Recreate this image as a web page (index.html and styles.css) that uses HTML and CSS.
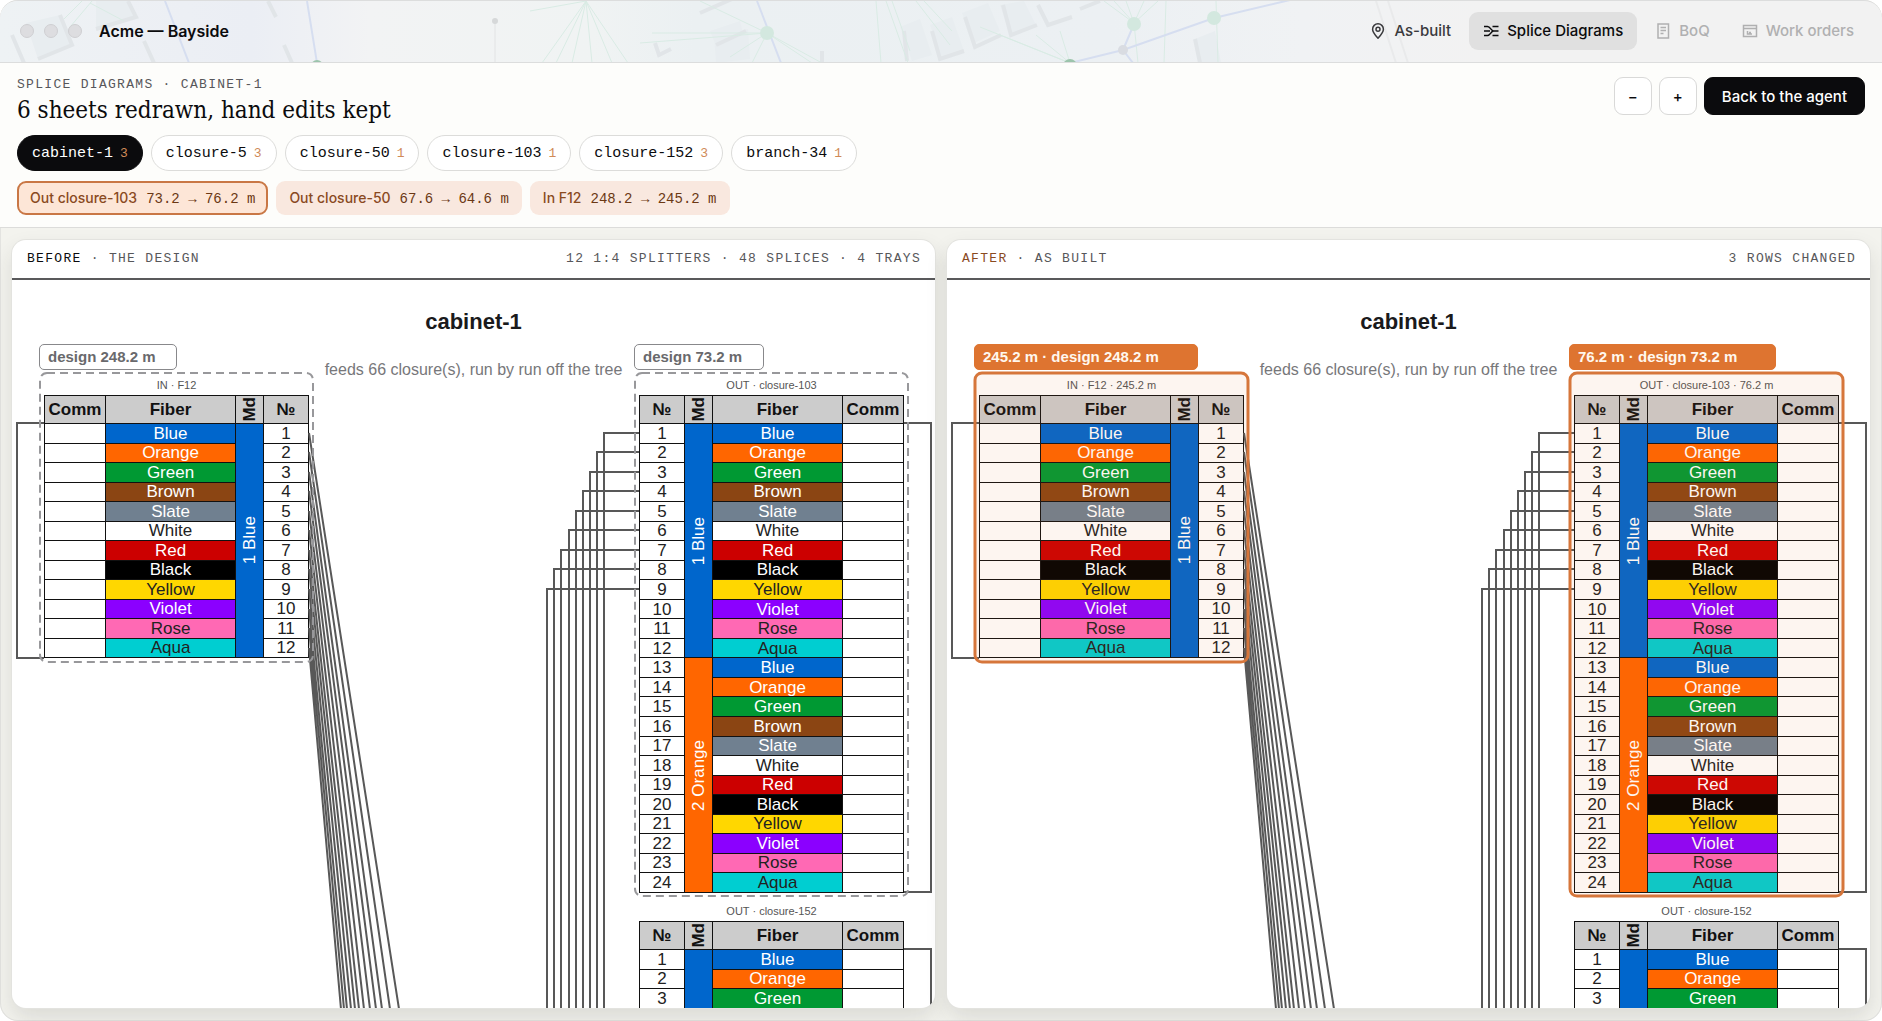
FILE: index.html
```html
<!DOCTYPE html>
<html lang="en">
<head>
<meta charset="utf-8">
<meta name="viewport" content="width=device-width, initial-scale=1">
<title>Acme — Bayside</title>
<link rel="stylesheet" href="styles.css">
</head>
<body>
<div class="app">
  <header class="titlebar">
    <svg class="backdrop" width="1480" height="62" aria-hidden="true">
      <defs>
        <linearGradient id="haze" x1="0" x2="1">
          <stop offset="0" stop-color="#eef2f4"/><stop offset=".08" stop-color="#edf0f4"/><stop offset=".17" stop-color="#ebeef4"/>
          <stop offset=".25" stop-color="#f2f3f4"/><stop offset=".4" stop-color="#f0f3f3"/><stop offset=".47" stop-color="#ebf0f2"/>
          <stop offset=".75" stop-color="#ecf0f3"/><stop offset=".88" stop-color="#f0f2f4"/><stop offset="1" stop-color="#f2f2f2"/>
        </linearGradient>
      </defs>
      <rect width="1480" height="62" fill="url(#haze)"/>
      <g fill="#e8edf0">
        <path d="M26 22l34-8 12 30-34 14zM96 0h32l8 16-40 12zM710 30l30-10 6 24-28 6zM714 34l34-6 2 30-34 4zM900 26l20-8 12 36-20 6zM930 24l22-8 12 34-22 8zM962 12l26-10 12 28-26 12zM1000 4l24-4 12 24-26 10zM1195 38l20-8 6 32h-20z"/>
      </g>
      <g fill="none" stroke="#e1e5e8" stroke-width="4">
        <path d="M12 34l12 28M60 14l12 30-34 14M128 0l8 16-40 12M144 40l10 22M268 0l8 16M284 44l8 18"/>
        <path d="M700 12l32-14M655 42l4 12 12-6M716 44l30-14M822 50v12M904 30l3 30M932 30l8 28 24-8M965 16l10 30 26-12M1003 4l8 30 26-10M1038 4l10 20 24-8M1080 8l20-8M1195 38l5 24"/>
      </g>
      <g fill="none" stroke="#d9ebe4" stroke-width="1">
        <path d="M64 18L82 0M70 26L92 0M90 2l34 18M586 0L542 62M586 0L556 62M586 0L572 62M586 0L592 62M586 0L612 62M586 0L628 62M586 0L530 10"/>
        <path d="M767 32L700 0M767 32L640 42M767 32L652 32M767 32L730 56M767 32L752 62M767 32L812 62M767 32L822 62M876 0l5 62M886 0l22 62M892 0l18 50M916 0l34 44M924 0l28 30"/>
        <path d="M1070 62L980 26M1070 62L1000 34M1070 62L1036 34M1070 62L1060 30M1134 22L1104 0M1134 22L1114 0M1134 22L1126 0M1134 22L1144 0M1134 22L1158 0M1134 22L1138 62M1166 0l-2 62M1216 0l2 62"/>
      </g>
      <g fill="none" stroke="#d6def0" stroke-width="2">
        <path d="M165 0l24 62M307 0l10 62M757 0l24 62M1070 62l53-13 91-32 76-18M1123 49l11-26M1123 49l10 13"/>
      </g>
      <path d="M1376 0l20 62M1388 0l20 62" stroke="#e9eaeb" stroke-width="2"/>
      <path d="M495 20v42" stroke="#e2e3e4"/>
      <circle cx="495" cy="20" r="3" fill="#d6d8d9"/>
      <g fill="#d3e8df"><circle cx="767" cy="32" r="7"/><circle cx="1134" cy="23" r="7"/><circle cx="1214" cy="17" r="7"/></g>
      <circle cx="1123" cy="49" r="5" fill="#d9dce2"/>
      <g fill="#9cc4ac"><circle cx="317" cy="65" r="6"/><circle cx="1070" cy="65" r="7"/></g>
    </svg>
    <span class="lights" aria-hidden="true"><i></i><i></i><i></i></span>
    <span class="project">Acme — Bayside</span>
    <nav class="nav" aria-label="Views">
      <button type="button"><svg width="16" height="16" viewBox="0 0 16 16" fill="none" stroke="currentColor" stroke-width="1.5"><path d="M8 15.2C5 12 2.6 9.400 2.600 6.200a5.400 5.400 0 0 1 10.800 0C13.400 9.400 11 12 8 15.200z"/><circle cx="8" cy="6.200" r="2"/></svg>As-built</button>
      <button type="button" class="on" aria-current="page"><svg width="16" height="16" viewBox="0 0 16 16" fill="none" stroke="currentColor" stroke-width="1.500"><path d="M1 3.500h3.500c3 0 3.500 4.500 6 4.500H15.500M1 12.500h3.500c3 0 3.500-4.500 6-4.500M1 8h6M9.500 3.500h6M9.500 12.500h6"/></svg>Splice Diagrams</button>
      <button type="button" disabled><svg width="16" height="16" viewBox="0 0 16 16" fill="none" stroke="currentColor" stroke-width="1.500"><path d="M3 1h10.500v14H3zM5.500 4.500h5.500M5.500 7.500h5.500M5.500 10.500h3"/></svg>BoQ</button>
      <button type="button" disabled><svg width="16" height="16" viewBox="0 0 16 16" fill="none" stroke="currentColor" stroke-width="1.500"><path d="M1.500 2.500h13v11h-13zM1.500 5.500h13M5.500 8v3h4.500M7 9.500h2"/></svg>Work orders</button>
    </nav>
  </header>

  <section class="toolbar">
    <div class="headline">
      <div>
        <p class="eyebrow">SPLICE DIAGRAMS · CABINET-1</p>
        <h1>6 sheets redrawn, hand edits kept</h1>
      </div>
      <div class="actions">
        <button type="button" class="square" aria-label="Zoom out">−</button>
        <button type="button" class="square" aria-label="Zoom in">+</button>
        <button type="button" class="primary">Back to the agent</button>
      </div>
    </div>
    <div class="chips">
      <button type="button" class="chip on">cabinet-1<small>3</small></button>
      <button type="button" class="chip">closure-5<small>3</small></button>
      <button type="button" class="chip">closure-50<small>1</small></button>
      <button type="button" class="chip">closure-103<small>1</small></button>
      <button type="button" class="chip">closure-152<small>3</small></button>
      <button type="button" class="chip">branch-34<small>1</small></button>
    </div>
    <div class="chips">
      <button type="button" class="delta on">Out closure-103<span>73.2 → 76.2 m</span></button>
      <button type="button" class="delta">Out closure-50<span>67.6 → 64.6 m</span></button>
      <button type="button" class="delta">In F12<span>248.2 → 245.2 m</span></button>
    </div>
  </section>

  <main class="compare">
    <section class="panel before">
      <header class="panel-head"><span><b>BEFORE</b> · THE DESIGN</span><span>12 1:4 SPLITTERS · 48 SPLICES · 4 TRAYS</span></header>
      <div class="viewport"><div class="sheet">
        <h2>cabinet-1</h2>
        <p class="feeds">feeds 66 closure(s), run by run off the tree</p>
        <div class="node in">
          <span class="tag">design 248.2 m</span>
          <table>
            <caption>IN · F12</caption>
            <thead><tr><th class="comm">Comm<th class="fiber">Fiber<th class="md"><span>Md</span><th class="no">№</thead>
            <tbody>
            <tr><td><td class="blue">Blue<td class="md blue" rowspan="12"><span>1 Blue</span><td>1
            <tr><td><td class="orange">Orange<td>2
            <tr><td><td class="green">Green<td>3
            <tr><td><td class="brown">Brown<td>4
            <tr><td><td class="slate">Slate<td>5
            <tr><td><td class="white">White<td>6
            <tr><td><td class="red">Red<td>7
            <tr><td><td class="black">Black<td>8
            <tr><td><td class="yellow">Yellow<td>9
            <tr><td><td class="violet">Violet<td>10
            <tr><td><td class="rose">Rose<td>11
            <tr><td><td class="aqua">Aqua<td>12
            </tbody>
          </table>
        </div>
        <div class="node out">
          <span class="tag">design 73.2 m</span>
          <table class="tall">
            <caption>OUT · closure-103</caption>
            <thead><tr><th class="no">№<th class="md"><span>Md</span><th class="fiber">Fiber<th class="comm">Comm</thead>
            <tbody>
            <tr><td>1<td class="md blue" rowspan="12"><span>1 Blue</span><td class="blue">Blue<td>
            <tr><td>2<td class="orange">Orange<td>
            <tr><td>3<td class="green">Green<td>
            <tr><td>4<td class="brown">Brown<td>
            <tr><td>5<td class="slate">Slate<td>
            <tr><td>6<td class="white">White<td>
            <tr><td>7<td class="red">Red<td>
            <tr><td>8<td class="black">Black<td>
            <tr><td>9<td class="yellow">Yellow<td>
            <tr><td>10<td class="violet">Violet<td>
            <tr><td>11<td class="rose">Rose<td>
            <tr><td>12<td class="aqua">Aqua<td>
            <tr><td>13<td class="md orange" rowspan="12"><span>2 Orange</span><td class="blue">Blue<td>
            <tr><td>14<td class="orange">Orange<td>
            <tr><td>15<td class="green">Green<td>
            <tr><td>16<td class="brown">Brown<td>
            <tr><td>17<td class="slate">Slate<td>
            <tr><td>18<td class="white">White<td>
            <tr><td>19<td class="red">Red<td>
            <tr><td>20<td class="black">Black<td>
            <tr><td>21<td class="yellow">Yellow<td>
            <tr><td>22<td class="violet">Violet<td>
            <tr><td>23<td class="rose">Rose<td>
            <tr><td>24<td class="aqua">Aqua<td>
            </tbody>
          </table>
          <table class="cut">
            <caption>OUT · closure-152</caption>
            <thead><tr><th class="no">№<th class="md"><span>Md</span><th class="fiber">Fiber<th class="comm">Comm</thead>
            <tbody>
            <tr><td>1<td class="md blue" rowspan="3"><td class="blue">Blue<td>
            <tr><td>2<td class="orange">Orange<td>
            <tr><td>3<td class="green">Green<td>
            </tbody>
          </table>
        </div>
        <svg class="wires" width="923" height="729" aria-hidden="true">
          <g id="wiring" class="wiring">
            <path d="M32 143H5V378H32M892 143H919V612H892M892 669H919V729"/>
            <path d="M627 153H592V729M627 172H585V729M627 192H578V729M627 211H571V729M627 231H564V729M627 250H557V729M627 270H549V729M627 289H542V729M627 309H535V729"/>
            <path d="M297 153L387 729M297 172L378 729M297 192L370 729M297 211L364 729M297 231L358 729M297 250L352 729M297 270L347 729M297 289L343 729M297 309L339 729M297 329L335 729M297 348L332 729M297 368L329 729"/>
          </g>
          <g class="marks"><rect x="28" y="93" width="273" height="289" rx="7"/><rect x="623" y="93" width="273" height="523" rx="7"/></g>
        </svg>
      </div></div>
    </section>

    <section class="panel after">
      <header class="panel-head"><span><b>AFTER</b> · AS BUILT</span><span>3 ROWS CHANGED</span></header>
      <div class="viewport"><div class="sheet">
        <h2>cabinet-1</h2>
        <p class="feeds">feeds 66 closure(s), run by run off the tree</p>
        <div class="node in">
          <span class="tag">245.2 m · design 248.2 m</span>
          <table>
            <caption>IN · F12 · 245.2 m</caption>
            <thead><tr><th class="comm">Comm<th class="fiber">Fiber<th class="md"><span>Md</span><th class="no">№</thead>
            <tbody>
            <tr><td><td class="blue">Blue<td class="md blue" rowspan="12"><span>1 Blue</span><td>1
            <tr><td><td class="orange">Orange<td>2
            <tr><td><td class="green">Green<td>3
            <tr><td><td class="brown">Brown<td>4
            <tr><td><td class="slate">Slate<td>5
            <tr><td><td class="white">White<td>6
            <tr><td><td class="red">Red<td>7
            <tr><td><td class="black">Black<td>8
            <tr><td><td class="yellow">Yellow<td>9
            <tr><td><td class="violet">Violet<td>10
            <tr><td><td class="rose">Rose<td>11
            <tr><td><td class="aqua">Aqua<td>12
            </tbody>
          </table>
        </div>
        <div class="node out">
          <span class="tag">76.2 m · design 73.2 m</span>
          <table class="tall">
            <caption>OUT · closure-103 · 76.2 m</caption>
            <thead><tr><th class="no">№<th class="md"><span>Md</span><th class="fiber">Fiber<th class="comm">Comm</thead>
            <tbody>
            <tr><td>1<td class="md blue" rowspan="12"><span>1 Blue</span><td class="blue">Blue<td>
            <tr><td>2<td class="orange">Orange<td>
            <tr><td>3<td class="green">Green<td>
            <tr><td>4<td class="brown">Brown<td>
            <tr><td>5<td class="slate">Slate<td>
            <tr><td>6<td class="white">White<td>
            <tr><td>7<td class="red">Red<td>
            <tr><td>8<td class="black">Black<td>
            <tr><td>9<td class="yellow">Yellow<td>
            <tr><td>10<td class="violet">Violet<td>
            <tr><td>11<td class="rose">Rose<td>
            <tr><td>12<td class="aqua">Aqua<td>
            <tr><td>13<td class="md orange" rowspan="12"><span>2 Orange</span><td class="blue">Blue<td>
            <tr><td>14<td class="orange">Orange<td>
            <tr><td>15<td class="green">Green<td>
            <tr><td>16<td class="brown">Brown<td>
            <tr><td>17<td class="slate">Slate<td>
            <tr><td>18<td class="white">White<td>
            <tr><td>19<td class="red">Red<td>
            <tr><td>20<td class="black">Black<td>
            <tr><td>21<td class="yellow">Yellow<td>
            <tr><td>22<td class="violet">Violet<td>
            <tr><td>23<td class="rose">Rose<td>
            <tr><td>24<td class="aqua">Aqua<td>
            </tbody>
          </table>
          <table class="cut">
            <caption>OUT · closure-152</caption>
            <thead><tr><th class="no">№<th class="md"><span>Md</span><th class="fiber">Fiber<th class="comm">Comm</thead>
            <tbody>
            <tr><td>1<td class="md blue" rowspan="3"><td class="blue">Blue<td>
            <tr><td>2<td class="orange">Orange<td>
            <tr><td>3<td class="green">Green<td>
            </tbody>
          </table>
        </div>
        <svg class="wires" width="923" height="729" aria-hidden="true">
          <use href="#wiring"/>
          <g class="marks"><rect x="28" y="93" width="273" height="289" rx="7"/><rect x="623" y="93" width="273" height="523" rx="7"/></g>
        </svg>
      </div></div>
    </section>
  </main>
</div>
</body>
</html>
```
FILE: styles.css
```css
* { box-sizing: border-box; }
body { margin: 0; background: #fff; font-family: Inter, "Open Sans", sans-serif; color: #0b0b0d; }
h1, h2, p { margin: 0; }
button { font: inherit; color: inherit; margin: 0; cursor: pointer; }

.app {
  height: 100vh;
  display: flex;
  flex-direction: column;
  overflow: hidden;
  border-radius: 18px;
  background: #f3f3ee;
  box-shadow: inset 0 0 0 1px #e3e3e0;
}

/* Title bar */
.titlebar {
  position: relative;
  display: flex;
  align-items: center;
  height: 63px;
  padding: 0 14px 2px 20px;
  background: #f2f2f2;
  border: 1px solid #dcdddd;
  border-width: 1px 0;
  border-radius: 18px 18px 0 0;
  overflow: hidden;
  flex: none;
}
.backdrop { position: absolute; left: 0; top: 0; }
.lights { position: relative; display: flex; gap: 10px; }
.lights i { width: 14px; height: 14px; border-radius: 50%; background: #dddde0; border: 1px solid #cfcfd2; }
.project { position: relative; margin-left: 17px; font-size: 16px; font-weight: 600; }
.nav { position: relative; display: flex; gap: 4px; margin-left: auto; }
.nav button {
  display: flex;
  align-items: center;
  gap: 8px;
  height: 38px;
  padding: 0 14px;
  border: 0;
  border-radius: 9px;
  background: none;
  color: #3a3a3d;
  font-size: 15px;
  font-weight: 500;
}
.nav .on { background: #e0e0e0; color: #0b0b0d; }
.nav button:disabled { color: #b0b0b1; cursor: default; }

/* Toolbar */
.toolbar {
  display: flex;
  flex-direction: column;
  padding: 14px 17px 12px;
  background: #fdfdfb;
  border-bottom: 1px solid #dcdcda;
  flex: none;
}
.headline { display: flex; justify-content: space-between; align-items: flex-start; }
.eyebrow { font: 13px/16px "Liberation Mono", monospace; letter-spacing: .1em; color: #57575a; }
h1 { margin-top: 1px; font: 400 24px/32px "DejaVu Serif Condensed", "DejaVu Serif", serif; }
.actions { display: flex; gap: 7px; }
.actions button { height: 38px; border: 1px solid #d9d9d8; border-radius: 9px; background: #fff; font-size: 15px; font-weight: 500; }
.actions .square { width: 38px; padding: 0; }
.actions .primary { padding: 0 17px; background: #0b0b0d; border-color: #0b0b0d; color: #fff; }
.chips { display: flex; flex-wrap: wrap; gap: 8px; margin-top: 10px; }
.headline + .chips { margin-top: 9px; }
.chip {
  display: flex;
  align-items: center;
  gap: 7px;
  height: 36px;
  padding: 0 14px;
  border: 1px solid #dcdcda;
  border-radius: 18px;
  background: #fff;
  font: 500 15px "Liberation Mono", monospace;
}
.chip small { font-size: 13px; color: #d08a58; }
.chip.on { background: #0b0b0d; border-color: #0b0b0d; color: #fff; }
.delta {
  display: flex;
  align-items: baseline;
  gap: 9px;
  height: 34px;
  padding: 0 11px;
  border: 2px solid transparent;
  border-radius: 9px;
  background: #f9e8df;
  color: #8a4a1f;
  font-size: 14px;
  font-weight: 500;
  line-height: 29px;
}
.delta span { font-family: "Liberation Mono", monospace; color: #6b3814; }
.delta.on { background: #fde6d7; border-color: #c97745; }

/* Side by side sheets */
.compare { flex: 1; min-height: 0; display: flex; gap: 12px; padding: 12px 12px 13px; }
.panel {
  flex: 1;
  min-width: 0;
  display: flex;
  flex-direction: column;
  overflow: hidden;
  border-radius: 14px;
  background: #fff;
  box-shadow: 0 0 0 1px #e3e3df, 0 10px 22px rgba(40, 45, 35, .12);
}
.panel-head {
  display: flex;
  justify-content: space-between;
  height: 40px;
  padding: 0 14px 0 15px;
  border-bottom: 2px solid #59595b;
  font: 13px/38px "Liberation Mono", monospace;
  letter-spacing: .1em;
  color: #57575a;
  white-space: pre;
}
.panel-head b { font-weight: 500; color: #0b0b0d; }
.after .panel-head b { color: #8a4a1f; }
.viewport { flex: 1; min-height: 0; overflow: hidden; }

.sheet {
  position: relative;
  width: 923px;
  height: 729px;
  margin: 0 auto;
  padding-top: 28px;
  text-align: center;
  font-family: "Liberation Sans", Arial, sans-serif;
}
h2 { font-size: 22px; line-height: 28px; color: #1a1a1c; }
.feeds { margin-top: 22px; font-size: 16px; line-height: 23px; color: #77777a; }
.wires { position: absolute; left: 0; top: 0; }
.wiring { fill: none; stroke: #585858; stroke-width: 2; }

/* Cable blocks, placed on the sheet's canvas */
.node { position: absolute; top: 64px; }
.in { left: 32px; }
.out { left: 627px; }
.tag {
  display: block;
  height: 26px;
  width: 138px;
  margin-left: -5px;
  padding-left: 8px;
  border: 1px solid #88888b;
  border-radius: 5px;
  background: #fff;
  color: #69696c;
  font-size: 15px;
  font-weight: 700;
  line-height: 24px;
  text-align: left;
}
.out .tag { width: 130px; }
.after .tag { width: 224px; border-color: #de7430; background: #de7430; color: #fff7ee; }
.after .out .tag { width: 207px; }
.marks { fill: none; stroke: #98989b; stroke-width: 2; stroke-dasharray: 8 5; }
.after .marks { fill: rgba(224, 115, 48, .07); stroke: #d6763b; stroke-width: 3; stroke-dasharray: none; }

table { width: 265px; height: 263px; border-collapse: collapse; table-layout: fixed; font-size: 17px; line-height: 17px; color: #222; }
caption { height: 25px; padding-top: 8px; font-size: 11px; line-height: 14px; color: #555; }
.tall { height: 498px; }
.cut { height: 88px; margin-top: 3px; }
th, td { padding: 0; border: 1px solid #111; }
thead { height: 28px; }
th { background: #ccc; color: #111; }
.comm { width: 61px; }
.fiber { width: 130px; }
th.md { width: 28px; }
.no { width: 45px; }
.md span { display: inline-block; writing-mode: vertical-rl; transform: rotate(180deg); vertical-align: middle; }
.blue { background: #0066cc; color: #fff; }
.orange { background: #ff6600; color: #fff; }
.green { background: #009933; color: #fff; }
.brown { background: #8b4513; color: #fff; }
.slate { background: #708090; color: #fff; }
.white { background: #fff; }
.red { background: #cc0000; color: #fff; }
.black { background: #000; color: #fff; }
.yellow { background: #ffd700; }
.violet { background: #8b00ff; color: #fff; }
.rose { background: #ff69b4; }
.aqua { background: #00ced1; }
```
